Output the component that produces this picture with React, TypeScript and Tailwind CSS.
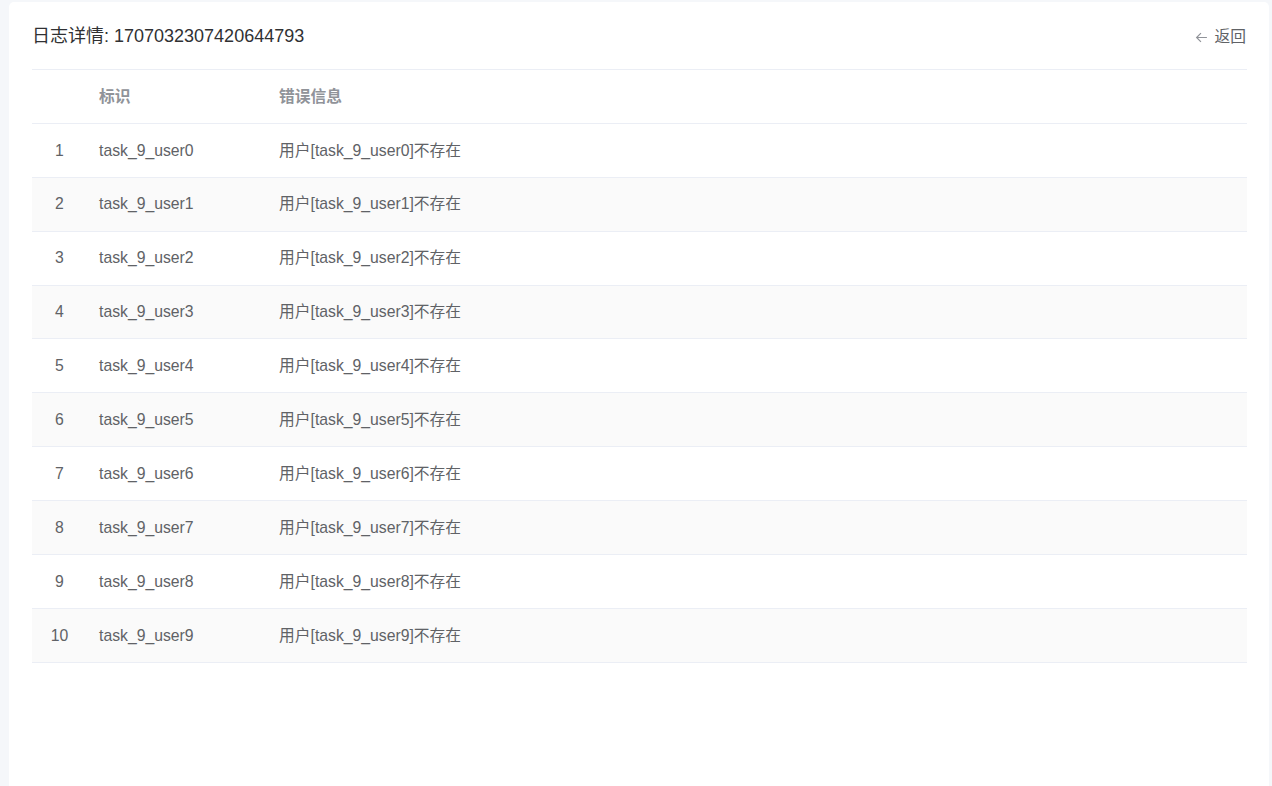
import React from "react";

const rows = Array.from({ length: 10 }, (_, i) => ({
  idx: i + 1,
  id: `task_9_user${i}`,
  msg: `用户[task_9_user${i}]不存在`,
}));

export default function App() {
  return (
    <div
      className="h-[786px] w-[1272px] overflow-hidden bg-[#f5f7fa] pt-[2px] pl-[9px]"
      style={{ fontFamily: '"Liberation Sans", "Noto Sans CJK SC", sans-serif' }}
    >
      <div className="h-[800px] w-[1260px] rounded-[5px] bg-white px-[23px] pt-[22px]">
        <div className="mb-[21px] flex h-[24px] items-center justify-between">
          <div className="text-[18px] text-[#303133]">日志详情: 1707032307420644793</div>
          <div className="flex items-center gap-[7px] pt-[2px] text-[15.75px] text-[#606266]">
            <svg width="13" height="13" viewBox="0 0 12 12" fill="none" stroke="#909399" strokeWidth="1.1">
              <path d="M11 6H1.5M5.5 2L1.5 6L5.5 10" />
            </svg>
            <span>返回</span>
          </div>
        </div>
        <div className="w-[1215px] border-t border-[#ebeef5] text-[15.75px]">
          <div className="flex h-[53.9px] items-center border-b border-[#ebeef5] font-bold text-[#909399]">
            <div className="w-[55px]" />
            <div className="w-[180px] px-[12px]">标识</div>
            <div className="px-[12px]">错误信息</div>
          </div>
          {rows.map((r) => (
            <div
              key={r.idx}
              className={`flex h-[53.9px] items-center border-b border-[#ebeef5] text-[#606266] ${
                r.idx % 2 === 0 ? "bg-[#fafafa]" : "bg-white"
              }`}
            >
              <div className="w-[55px] text-center">{r.idx}</div>
              <div className="w-[180px] px-[12px]">{r.id}</div>
              <div className="px-[12px]">{r.msg}</div>
            </div>
          ))}
        </div>
      </div>
    </div>
  );
}
